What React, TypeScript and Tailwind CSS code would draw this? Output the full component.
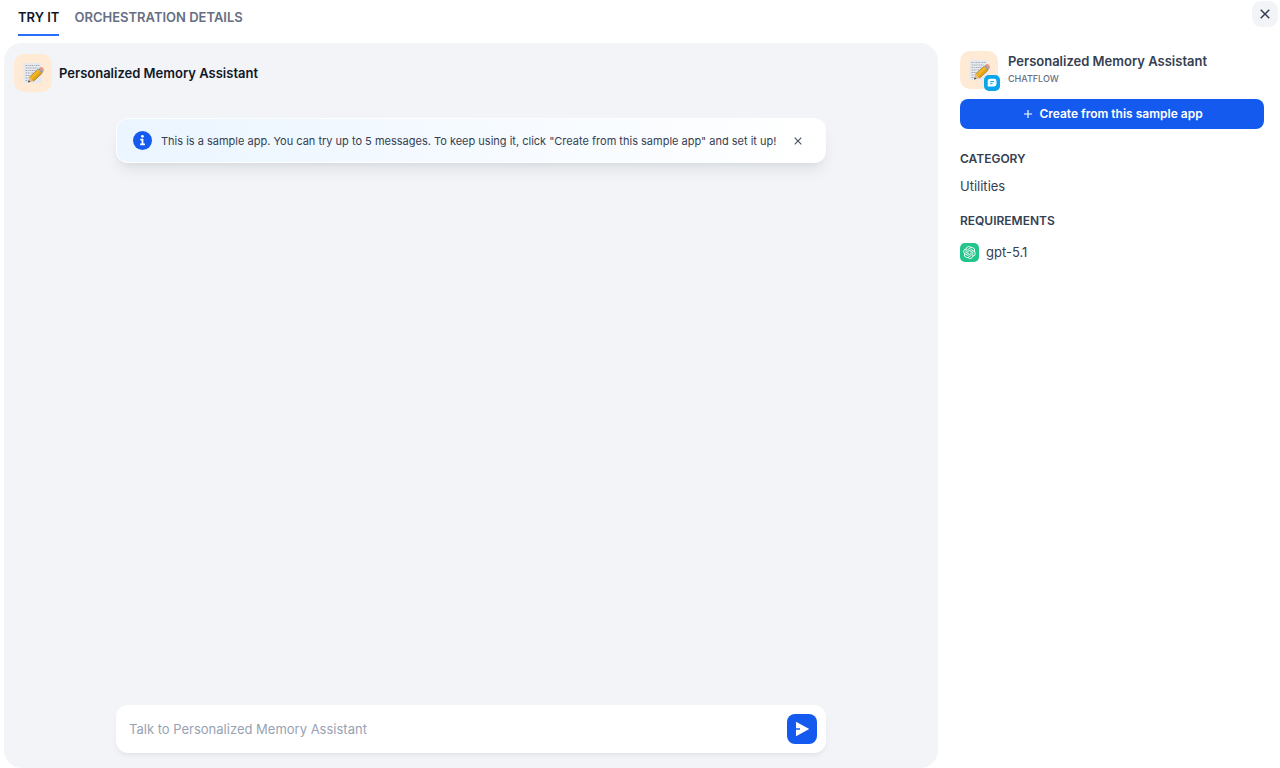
import { useState } from "react";
import { RiAddLine, RiCloseLine, RiOpenaiFill, RiSendPlane2Fill } from "react-icons/ri";

const APP_NAME = "Personalized Memory Assistant";

const tabs = [
  { id: "try", label: "TRY IT" },
  { id: "detail", label: "ORCHESTRATION DETAILS" },
];

function MemoIcon() {
  return (
    <svg className="w-[22px] h-[22px]" viewBox="0 0 22 22" fill="none">
      <path d="M1.5 1h18v20h-18z" fill="#e6e9ed" />
      <path
        d="M3.5 3.5h3m1 0h5m1 0h4M3.5 6h6m1 0h5M3.5 8.5h3m1 0h6M3.5 11h5m1 0h2M3.5 13.5h5M3.5 16h3M3.5 18.5h2"
        stroke="#a9acb2"
        strokeWidth="1"
        strokeDasharray="1.8 0.5"
      />
      <path d="M6 20.5l1.3-5.2 4.2 4z" fill="#e5b98c" />
      <path d="M6 20.5l.6-2.2 1.8 1.5z" fill="#3b3f48" />
      <path d="M7.3 15.3l8.7-8.1 4 4.1-8.5 8z" fill="#f2b51f" />
      <path d="M9.7 17.6l8.5-8.1 1.8 1.8-8.5 8z" fill="#e2a31c" />
      <path d="M16 7.2l1.3-1.2 4 4.1-1.3 1.2z" fill="#8d95a2" />
      <path d="M17.3 6l.7-.6c2-1.4 4.9 1.5 3.6 3.9l-.3.8z" fill="#e59a84" />
      <path d="M7.3 15.3l8.7-8.1M11.5 19.3l8.5-8" stroke="#7b592c" strokeWidth="0.5" />
    </svg>
  );
}

function AppIcon({ badge = false }: { badge?: boolean }) {
  return (
    <div className="relative flex items-center justify-center w-[38px] h-[38px] rounded-[10px] bg-[#ffead5] shrink-0">
      <MemoIcon />
      {badge && (
        <span className="absolute -right-[2px] -bottom-[2px] flex items-center justify-center w-4 h-4 rounded-[5px] bg-[#0ba5ec]">
          <svg className="w-[10px] h-[10px]" viewBox="0 0 10 10" fill="none">
            <path d="M3 .8h4.2a2.3 2.3 0 012.3 2.3v3a2.3 2.3 0 01-2.3 2.3H1.2a.6.6 0 01-.5-.9V3.1A2.3 2.3 0 013 .8z" fill="white" />
            <path d="M3.1 3.6h4M3.1 5.7h2.5" stroke="#0ba5ec" strokeWidth="1" />
          </svg>
        </span>
      )}
    </div>
  );
}

function InfoIcon() {
  return (
    <svg className="w-[19px] h-[19px] shrink-0" viewBox="0 0 19 19">
      <circle cx="9.5" cy="9.5" r="9.5" fill="#155aef" />
      <circle cx="9.4" cy="5.3" r="1.4" fill="white" />
      <path d="M7.3 7.8h3.1v4.7h1.5v1.7H7.2v-1.7h1.4V9.4H7.3z" fill="white" />
    </svg>
  );
}

function SampleNotice({ onClose }: { onClose: () => void }) {
  return (
    <div className="flex items-center h-[45px] pl-4 pr-5 rounded-xl border border-white/80 bg-linear-to-r from-[#ebf5ff] to-white shadow-lg shadow-gray-900/8">
      <InfoIcon />
      <p className="flex-1 ml-[9px] text-[11px] leading-4 text-[#354052] whitespace-nowrap">
        This is a sample app. You can try up to 5 messages. To keep using it, click "Create from this sample app" and set it up!
      </p>
      <button type="button" aria-label="Dismiss" onClick={onClose} className="text-[#495464] shrink-0">
        <RiCloseLine className="w-[14px] h-[14px]" />
      </button>
    </div>
  );
}

function ChatPanel() {
  const [showNotice, setShowNotice] = useState(true);
  const [message, setMessage] = useState("");

  return (
    <main className="flex flex-col flex-1 min-w-0 rounded-[18px] bg-[#f2f4f7]">
      <div className="flex items-center gap-[7px] pl-[10px] pt-[11px]">
        <AppIcon />
        <h1 className="text-[13px] leading-5 font-semibold text-[#101828]">{APP_NAME}</h1>
      </div>
      <div className="flex flex-col flex-1 w-full max-w-[710px] mx-auto pt-[26px] pb-[15px]">
        {showNotice && <SampleNotice onClose={() => setShowNotice(false)} />}
        <form
          onSubmit={(e) => e.preventDefault()}
          className="flex items-center h-12 mt-auto pl-[13px] pr-[9px] rounded-xl bg-white shadow-md shadow-gray-900/5"
        >
          <input
            type="text"
            aria-label="Message"
            value={message}
            onChange={(e) => setMessage(e.target.value)}
            placeholder={`Talk to ${APP_NAME}`}
            className="flex-1 min-w-0 text-[13px] leading-5 text-[#101828] placeholder:text-[#98a2b2] outline-none"
          />
          <button
            type="submit"
            aria-label="Send"
            className="flex items-center justify-center w-[30px] h-[30px] rounded-lg bg-[#155aef] text-white"
          >
            <RiSendPlane2Fill className="w-4 h-4" />
          </button>
        </form>
      </div>
    </main>
  );
}

function AppInfo() {
  return (
    <aside className="w-[342px] shrink-0 pl-[22px] pr-4 pt-2">
      <div className="flex items-start gap-[10px]">
        <AppIcon badge />
        <div>
          <h2 className="text-[13px] leading-5 font-semibold text-[#354052]">{APP_NAME}</h2>
          <p className="text-[9px] leading-4 font-medium text-[#676f83]">CHATFLOW</p>
        </div>
      </div>
      <button
        type="button"
        className="flex items-center justify-center gap-1 w-full h-[30px] mt-[10px] rounded-lg bg-[#155aef] text-xs leading-5 font-semibold text-white"
      >
        <RiAddLine className="w-[14px] h-[14px]" />
        Create from this sample app
      </button>
      <h3 className="mt-5 text-xs leading-5 font-semibold text-[#354052]">CATEGORY</h3>
      <p className="mt-[7px] text-[13px] leading-5 text-[#354052]">Utilities</p>
      <h3 className="mt-[15px] text-xs leading-5 font-semibold text-[#354052]">REQUIREMENTS</h3>
      <div className="flex items-center gap-[7px] mt-[11px] text-[13px] leading-5 text-[#354052]">
        <span className="flex items-center justify-center w-[19px] h-[19px] rounded-[5px] bg-[#22c58b] text-white">
          <RiOpenaiFill className="w-[15px] h-[15px]" />
        </span>
        gpt-5.1
      </div>
    </aside>
  );
}

export default function App() {
  const [activeTab, setActiveTab] = useState("try");

  return (
    <div className="flex flex-col min-h-screen bg-white font-['Inter',sans-serif]">
      <header className="flex items-start justify-between pl-[18px] pr-[2px] pb-[7px]">
        <nav className="flex gap-[15px]">
          {tabs.map((tab) => (
            <button
              key={tab.id}
              type="button"
              onClick={() => setActiveTab(tab.id)}
              className={`h-9 pt-px border-b-2 text-[13px] font-semibold ${
                activeTab === tab.id
                  ? "border-[#296dff] text-[#101828]"
                  : "border-transparent text-[#676f83]"
              }`}
            >
              {tab.label}
            </button>
          ))}
        </nav>
        <button
          type="button"
          aria-label="Close"
          className="flex items-center justify-center w-[26px] h-[26px] mt-px rounded-[9px] bg-[#f2f4f7] text-[#354052]"
        >
          <RiCloseLine className="w-[18px] h-[18px]" />
        </button>
      </header>
      <div className="flex flex-1 pl-1">
        <ChatPanel />
        <AppInfo />
      </div>
    </div>
  );
}
